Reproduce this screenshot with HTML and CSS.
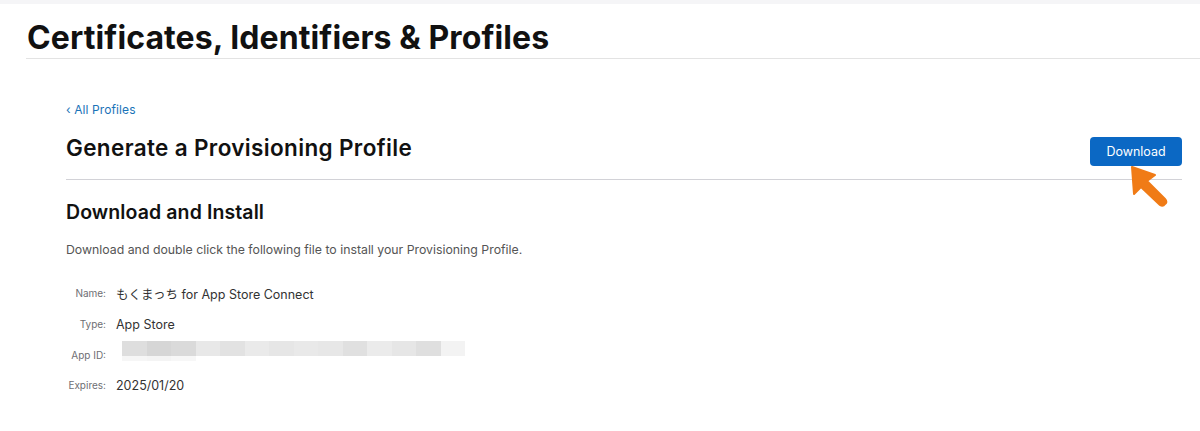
FILE: index.html
```html
<!DOCTYPE html>
<html lang="en">
<head>
<meta charset="utf-8">
<title>Certificates, Identifiers &amp; Profiles</title>
<link rel="stylesheet" href="styles.css">
</head>
<body>
<div class="topband"></div>
<header class="header">
  <h1 class="title">Certificates, Identifiers &amp; Profiles</h1>
</header>
<main class="content">
  <a class="back" href="#">‹ All Profiles</a>
  <div class="pagehead">
    <h2 class="pagetitle">Generate a Provisioning Profile</h2>
    <div class="btnwrap">
      <button class="btn">Download</button>
      <svg class="arrow" width="50" height="50" viewBox="0 0 50 50">
        <path d="M2 1 L4 28 L11 21 L30 39 Q33 41 35 38 L36 37 Q37 35 35 33 L17 15 L25 9 Z" fill="#f07b16" stroke="#f07b16" stroke-width="2" stroke-linejoin="round"/>
      </svg>
    </div>
  </div>
  <section class="section">
    <h3 class="sectitle">Download and Install</h3>
    <p class="desc">Download and double click the following file to install your Provisioning Profile.</p>
    <dl class="details">
      <div class="row"><dt class="label">Name:</dt><dd class="value">もくまっち for App Store Connect</dd></div>
      <div class="row"><dt class="label">Type:</dt><dd class="value">App Store</dd></div>
      <div class="row"><dt class="label">App ID:</dt><dd class="value blur">
        <span class="pxrow">
          <span class="px" style="background:#dedede"></span><span class="px" style="background:#d6d6d6"></span><span class="px" style="background:#dadada"></span><span class="px" style="background:#e8e8e8"></span><span class="px" style="background:#e2e2e2"></span><span class="px" style="background:#eaeaea"></span><span class="px" style="background:#e6e6e6"></span><span class="px" style="background:#e9e9e9"></span><span class="px" style="background:#e7e7e7"></span><span class="px" style="background:#e0e0e0"></span><span class="px" style="background:#ebebeb"></span><span class="px" style="background:#e6e6e6"></span><span class="px" style="background:#dfdfdf"></span><span class="px" style="background:#f3f3f3"></span>
        </span>
        <span class="pxrow small">
          <span class="px" style="background:#f6f6f6"></span><span class="px" style="background:#f4f4f4"></span><span class="px" style="background:#f7f7f7"></span>
        </span>
      </dd></div>
      <div class="row"><dt class="label">Expires:</dt><dd class="value">2025/01/20</dd></div>
    </dl>
  </section>
</main>
</body>
</html>
```
FILE: styles.css
```css
* { box-sizing: border-box; }
html, body { margin: 0; padding: 0; background: #fff; }
body {
  font-family: Inter, "Noto Sans CJK JP", "Liberation Sans", sans-serif;
  color: #1d1d1f;
  width: 1200px;
  height: 431px;
  overflow: hidden;
}
.topband { height: 4px; background: #f5f5f7; }
.header {
  margin-left: 26px;
  height: 55px;
  border-bottom: 1px solid #e3e3e3;
  display: flex;
  align-items: flex-end;
}
.title {
  margin: 0 0 1px 1px;
  font-size: 32px;
  font-weight: 700;
  letter-spacing: 0.1px;
  line-height: 38px;
  color: #111;
}
.content { padding: 43px 18px 0 66px; }
.back {
  display: block;
  font-size: 12px;
  letter-spacing: 0.1px;
  color: #1a73b8;
  text-decoration: none;
  line-height: 16px;
}
.pagehead {
  display: flex;
  justify-content: space-between;
  align-items: flex-start;
  border-bottom: 1px solid #d2d2d7;
  height: 62px;
  padding-top: 16px;
}
.pagetitle {
  margin: 0;
  font-size: 22.5px;
  font-weight: 600;
  letter-spacing: 0.35px;
  line-height: 28px;
  color: #111;
}
.btnwrap { position: relative; margin-top: 3px; }
.btn {
  display: block;
  width: 92px;
  height: 29px;
  border: 0;
  border-radius: 4px;
  background: #0b68c4;
  color: #fff;
  font-family: inherit;
  font-size: 12.5px;
  padding: 0;
}
.arrow { position: absolute; left: 40px; top: 29px; }
.section { padding-top: 21px; }
.sectitle {
  margin: 0;
  font-size: 19.5px;
  font-weight: 600;
  letter-spacing: 0.1px;
  line-height: 22px;
  color: #111;
}
.desc {
  margin: 19px 0 0;
  font-size: 12.3px;
  color: #555;
  line-height: 16px;
}
.details { margin: 20px 0 0 -14px; }
.row {
  display: flex;
  align-items: center;
  height: 30.7px;
}
.label {
  width: 54px;
  text-align: right;
  font-size: 10px;
  color: #6e6e73;
  margin-right: 10px;
}
.value {
  margin: 0;
  font-size: 12.5px;
  color: #333;
}
.blur {
  display: flex;
  flex-direction: column;
  margin-left: 6px;
  margin-bottom: 8px;
}
.pxrow { display: flex; height: 15px; }
.pxrow.small { height: 5px; }
.px { display: block; width: 24.5px; height: 100%; }
```
